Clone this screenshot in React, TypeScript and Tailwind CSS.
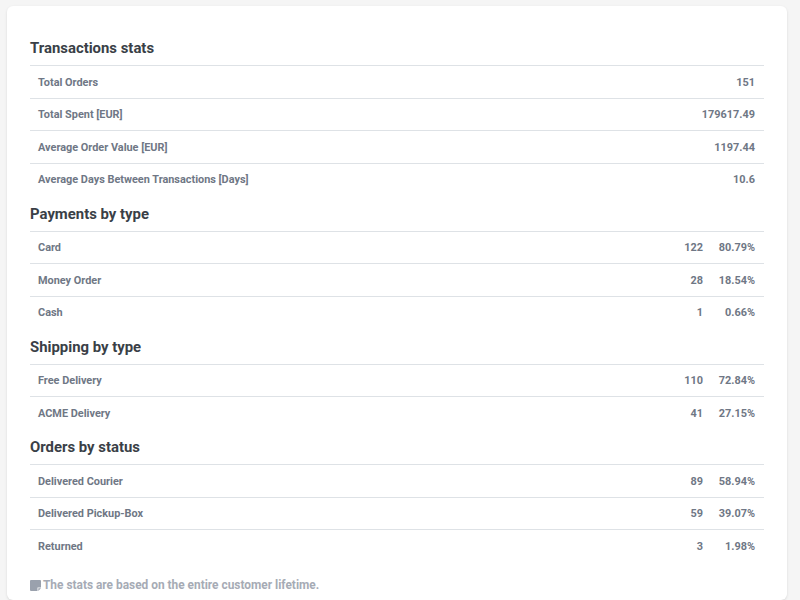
const sections = [
  {
    title: 'Transactions stats',
    rows: [
      ['Total Orders', '151'],
      ['Total Spent [EUR]', '179617.49'],
      ['Average Order Value [EUR]', '1197.44'],
      ['Average Days Between Transactions [Days]', '10.6'],
    ],
  },
  {
    title: 'Payments by type',
    rows: [
      ['Card', '122', '80.79%'],
      ['Money Order', '28', '18.54%'],
      ['Cash', '1', '0.66%'],
    ],
  },
  {
    title: 'Shipping by type',
    rows: [
      ['Free Delivery', '110', '72.84%'],
      ['ACME Delivery', '41', '27.15%'],
    ],
  },
  {
    title: 'Orders by status',
    rows: [
      ['Delivered Courier', '89', '58.94%'],
      ['Delivered Pickup-Box', '59', '39.07%'],
      ['Returned', '3', '1.98%'],
    ],
  },
];

function StatRow({ cells }: Readonly<{ cells: string[] }>) {
  const [label, first, second] = cells;
  return (
    <div className="flex h-[32.5px] items-center border-t border-[#dee2e6] pl-2 pr-[9px] pt-[2px] text-[10.9px] font-bold text-[#6f7785]">
      <span className="flex-1">{label}</span>
      <span>{first}</span>
      {second && <span className="w-[52px] text-right">{second}</span>}
    </div>
  );
}

export default function App() {
  return (
    <div className="h-[600px] overflow-hidden bg-[#f5f5f5] pl-[7px] pr-[13px] pt-[6px] font-['Roboto',sans-serif]">
      <div className="h-[594px] rounded-md bg-white px-[23px] pt-[23.5px] shadow-sm">
        {sections.map(section => (
          <section key={section.title}>
            <h2 className="flex h-[35.5px] items-center pt-[2px] text-[14.9px] font-bold text-[#3a3f47]">{section.title}</h2>
            {section.rows.map(row => (
              <StatRow key={row[0]} cells={row} />
            ))}
          </section>
        ))}
        <p className="mt-[15px] flex items-center gap-[2px] text-[11.9px] font-bold text-[#a6abb5]">
          <svg width="11" height="11" viewBox="0 0 11 11" className="shrink-0" aria-hidden="true">
            <path d="M1 0h9a1 1 0 0 1 1 1v6.5H7.5V11H1a1 1 0 0 1-1-1V1a1 1 0 0 1 1-1Z" fill="#9aa1ad" />
            <path d="M8.3 8.3H11L8.3 11Z" fill="#9aa1ad" />
          </svg>
          The stats are based on the entire customer lifetime.
        </p>
      </div>
    </div>
  );
}
